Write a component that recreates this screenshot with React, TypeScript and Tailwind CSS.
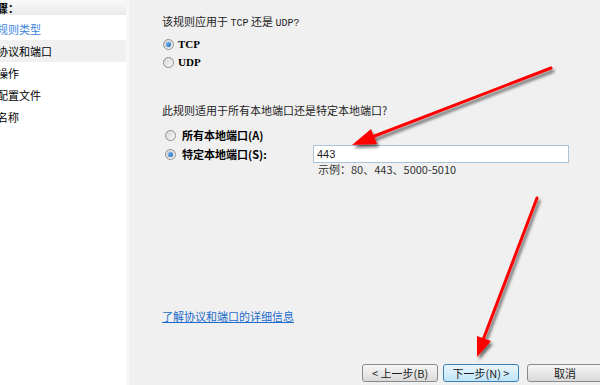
import React from "react";

const cjk = "font-['Tahoma','Noto_Sans_CJK_SC',sans-serif]";

function Radio({ checked }: { checked?: boolean }) {
  return (
    <span className="relative flex h-[11px] w-[11px] shrink-0 items-center justify-center rounded-full border border-[#8e8f8f] bg-gradient-to-br from-[#d6d6d6] to-[#fbfbfb]">
      {checked && (
        <span className="h-[5px] w-[5px] rounded-full bg-gradient-to-br from-[#7cc4f6] to-[#1a63b8] shadow-[0_0_1px_#0b4a92]" />
      )}
    </span>
  );
}

function Btn({ children, primary }: { children: React.ReactNode; primary?: boolean }) {
  return (
    <div
      className={
        "flex h-[18px] w-[76px] shrink-0 items-center justify-center rounded-[3px] border text-[11px] leading-[14px] text-[#1b1b1b] " +
        (primary
          ? "border-[#3c7fb1] bg-gradient-to-b from-[#eaf6fd] to-[#bfe4f9]"
          : "border-[#8a8a8a] bg-gradient-to-b from-[#f6f6f6] to-[#dadada]")
      }
    >
      {children}
    </div>
  );
}

const steps = [
  { label: "规则类型", active: true },
  { label: "协议和端口", current: true },
  { label: "操作" },
  { label: "配置文件" },
  { label: "名称" },
];

export default function App() {
  return (
    <div className={`relative flex h-[385px] w-[600px] overflow-hidden bg-[#f0f0f0] text-[11px] leading-[16px] text-[#1e1e1e] ${cjk}`}>
      {/* Steps sidebar */}
      <div className="flex w-[129px] shrink-0 flex-col border-r-[3px] border-[#f7f7f7] bg-white">
        <div className="flex h-[15px] items-center bg-gradient-to-b from-[#fafafa] to-[#e9e9e9]">
          <span className="-ml-[3px] font-bold text-black">骤：</span>
        </div>
        <div className="mt-[3px] flex flex-col">
          {steps.map((s) => (
            <div
              key={s.label}
              className={"flex h-[22px] items-center " + (s.current ? "bg-[#f0f0f0]" : "")}
            >
              <span className={"-ml-[3px] " + (s.active ? "text-[#3b82dc]" : "text-black")}>{s.label}</span>
            </div>
          ))}
        </div>
      </div>

      {/* Page content */}
      <div className="flex h-[385px] flex-1 flex-col pl-[33px]">
        <div className="mt-[13px] h-[16px] overflow-hidden whitespace-pre">
          该规则应用于 <span className="font-['Liberation_Mono'] text-[10px]">TCP</span> 还是{" "}
          <span className="font-['Liberation_Mono'] text-[10px]">UDP?</span>
        </div>

        <div className="mt-[7px] flex h-[16px] items-center gap-[4px] pl-[1px]">
          <Radio checked />
          <span className="font-['Liberation_Serif'] font-bold text-black">TCP</span>
        </div>
        <div className="mt-[2px] flex h-[16px] items-center gap-[4px] pl-[1px]">
          <Radio />
          <span className="font-['Liberation_Serif'] font-bold text-black">UDP</span>
        </div>

        <div className="mt-[32px] flex h-[16px] items-center">此规则适用于所有本地端口还是特定本地端口?</div>

        <div className="mt-[9px] flex h-[16px] items-center gap-[6px] pl-[3px]">
          <Radio />
          <span className="font-bold text-black">所有本地端口(A)</span>
        </div>
        <div className="mt-[2px] flex h-[30px] items-start pl-[3px]">
          <div className="flex h-[18px] w-[148px] items-center gap-[6px]">
            <Radio checked />
            <span className="font-bold text-black">特定本地端口(S):</span>
          </div>
          <div className="flex flex-col">
            <div className="flex h-[18px] w-[256px] items-center border border-[#a9c3d8] bg-white pl-[3px] font-['Liberation_Sans'] text-[11px]">
              443
            </div>
            <div className="-mt-[1px] flex h-[14px] items-center pl-[5px] text-[#333]">示例：80、443、5000-5010</div>
          </div>
        </div>

        <div className="mt-[133px] flex h-[16px] items-center">
          <span className="text-[#1c6ccc] underline">了解协议和端口的详细信息</span>
        </div>

        <div className="mb-[3px] mt-auto flex gap-[5px] pl-[200px]">
          <Btn>&lt; 上一步(B)</Btn>
          <Btn primary>下一步(N) &gt;</Btn>
          <div className="ml-[3px]">
            <Btn>取消</Btn>
          </div>
        </div>
      </div>

      {/* Annotation arrows */}
      <svg className="pointer-events-none absolute inset-0" width="600" height="385" viewBox="0 0 600 385">
        <defs>
          <filter id="sh" x="-20%" y="-20%" width="140%" height="140%">
            <feDropShadow dx="2" dy="3" stdDeviation="1.5" floodColor="#000" floodOpacity="0.55" />
          </filter>
        </defs>
        <g filter="url(#sh)" fill="#ff0000" stroke="#ff0000">
          <line x1="551" y1="68" x2="372" y2="137" strokeWidth="3" strokeLinecap="round" />
          <polygon points="352,145 377,144 371,129" stroke="none" />
          <line x1="537" y1="198" x2="483" y2="340" strokeWidth="3" strokeLinecap="round" />
          <polygon points="477,357 491,341 477,336" stroke="none" />
        </g>
      </svg>
    </div>
  );
}
